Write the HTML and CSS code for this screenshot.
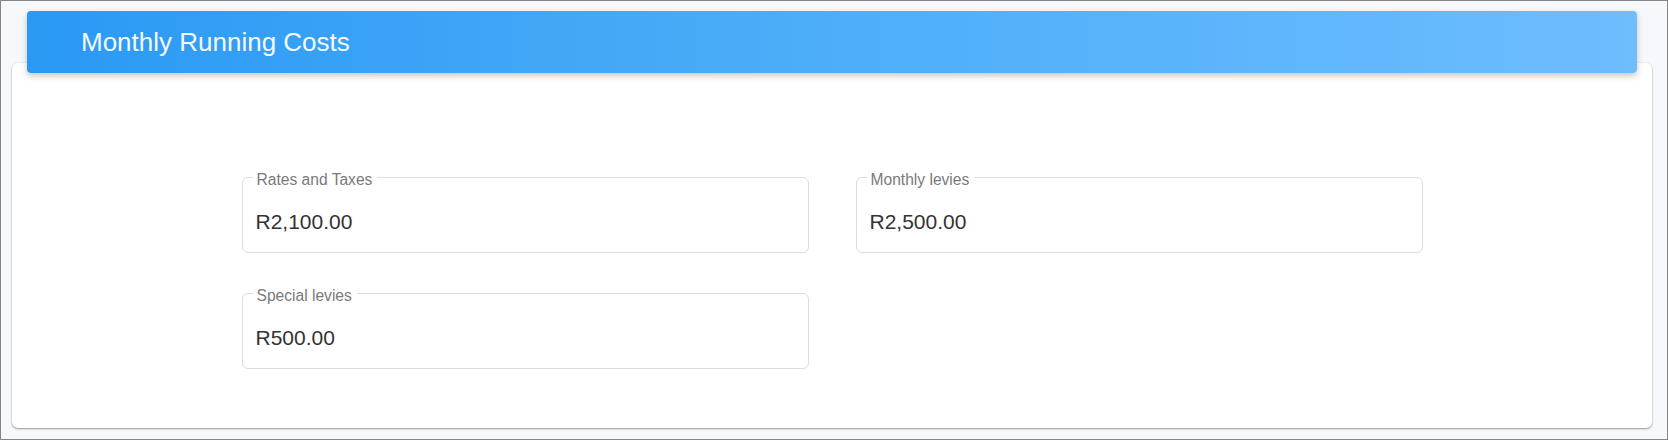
FILE: index.html
```html
<!DOCTYPE html>
<html lang="en">
<head>
<meta charset="utf-8">
<title>Monthly Running Costs</title>
<link rel="stylesheet" href="styles.css">
</head>
<body>
<div class="frame">
  <div class="header">
    <h2 class="title">Monthly Running Costs</h2>
  </div>
  <div class="card">
    <div class="fields">
      <div class="field">
        <span class="label">Rates and Taxes</span>
        <div class="value">R2,100.00</div>
      </div>
      <div class="field">
        <span class="label">Monthly levies</span>
        <div class="value">R2,500.00</div>
      </div>
      <div class="field">
        <span class="label">Special levies</span>
        <div class="value">R500.00</div>
      </div>
    </div>
  </div>
</div>
</body>
</html>
```
FILE: styles.css
```css
html, body {
  margin: 0;
  padding: 0;
}
body {
  font-family: "Liberation Sans", Arial, sans-serif;
}
.frame {
  box-sizing: border-box;
  width: 1668px;
  height: 440px;
  border: 1px solid #858585;
  background: #f7f8fb;
  padding: 10px 15px 0 11px;
}
.header {
  position: relative;
  z-index: 1;
  box-sizing: border-box;
  height: 62px;
  margin: 0 15px -10px 15px;
  padding-left: 54px;
  border-radius: 4px;
  background: linear-gradient(90deg, #2a99f4 0%, #4aacf8 45%, #6dbdff 100%);
  box-shadow: 0 3px 6px rgba(0, 0, 0, 0.22);
  display: flex;
  align-items: center;
}
.title {
  margin: 0;
  font-weight: normal;
  font-size: 26px;
  line-height: 30px;
  color: #f4f9ff;
}
.card {
  box-sizing: border-box;
  height: 365px;
  background: #ffffff;
  border-radius: 6px;
  box-shadow: 0 1px 2px rgba(0, 0, 0, 0.38), 0 0 2px rgba(0, 0, 0, 0.08);
  padding-top: 114px;
}
.fields {
  display: grid;
  grid-template-columns: 567px 567px;
  column-gap: 47px;
  row-gap: 40px;
  justify-content: center;
}
.field {
  position: relative;
  box-sizing: border-box;
  height: 76px;
  border: 1px solid #dcdde0;
  border-radius: 6px;
  padding: 32px 14px 0 13px;
}
.label {
  position: absolute;
  top: -7px;
  left: 10px;
  padding: 0 5px 0 4px;
  background: #ffffff;
  font-size: 15.6px;
  line-height: 18px;
  color: #7a7a7a;
}
.value {
  font-size: 21px;
  line-height: 24px;
  color: #333333;
}
```
